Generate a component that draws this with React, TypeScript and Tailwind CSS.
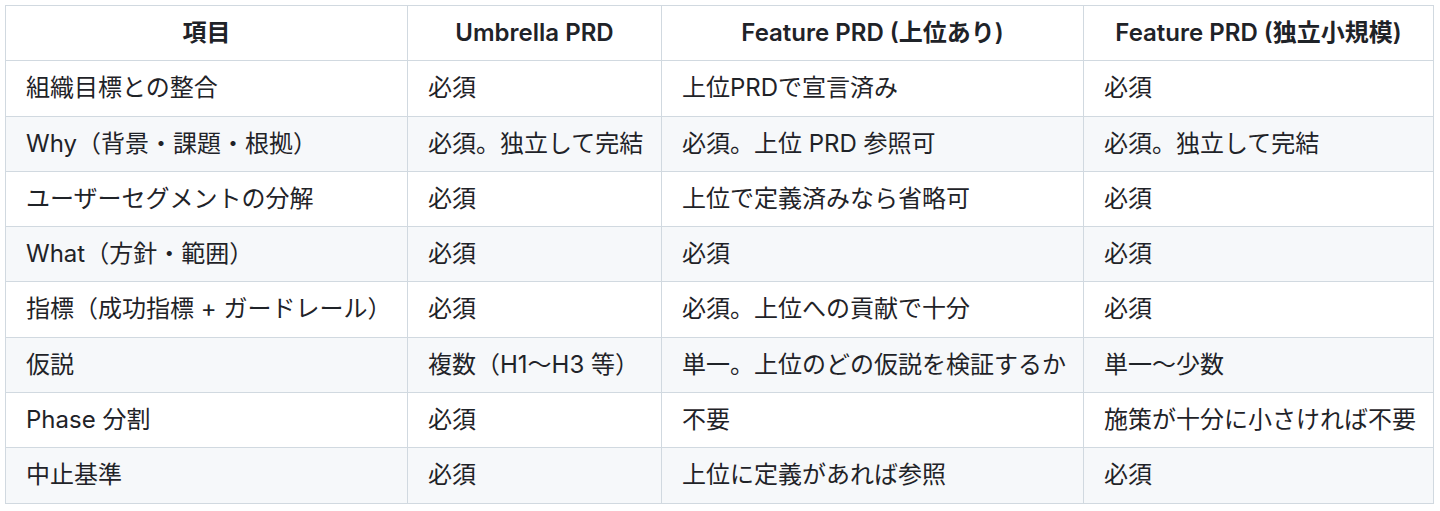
const headers = ['項目', 'Umbrella PRD', 'Feature PRD (上位あり)', 'Feature PRD (独立小規模)'];

const rows = [
  ['組織目標との整合', '必須', '上位PRDで宣言済み', '必須'],
  ['Why（背景・課題・根拠）', '必須。独立して完結', '必須。上位 PRD 参照可', '必須。独立して完結'],
  ['ユーザーセグメントの分解', '必須', '上位で定義済みなら省略可', '必須'],
  ['What（方針・範囲）', '必須', '必須', '必須'],
  ['指標（成功指標 + ガードレール）', '必須', '必須。上位への貢献で十分', '必須'],
  ['仮説', '複数（H1〜H3 等）', '単一。上位のどの仮説を検証するか', '単一〜少数'],
  ['Phase 分割', '必須', '不要', '施策が十分に小さければ不要'],
  ['中止基準', '必須', '上位に定義があれば参照', '必須'],
];

const App = () => {
  return (
    <div className="bg-white w-[1440px] h-[511px] pt-[5px] pl-[5px] text-[#1f2328] font-['Inter','Noto_Sans_CJK_JP',sans-serif]">
      <table className="table-fixed border-collapse w-[1428px] text-[24px] leading-[36.3px]">
        <colgroup>
          <col className="w-[402px]" />
          <col className="w-[254px]" />
          <col className="w-[422px]" />
          <col className="w-[350px]" />
        </colgroup>
        <thead>
          <tr className="bg-white">
            {headers.map((h) => (
              <th
                key={h}
                className="border border-[#d1d9e0] px-[20px] py-[9px] font-semibold text-center whitespace-nowrap"
              >
                {h}
              </th>
            ))}
          </tr>
        </thead>
        <tbody>
          {rows.map((row, i) => (
            <tr key={i} className={i % 2 === 1 ? 'bg-[#f6f8fa]' : 'bg-white'}>
              {row.map((cell, j) => (
                <td key={j} className="border border-[#d1d9e0] px-[20px] py-[9px] whitespace-nowrap">
                  {cell}
                </td>
              ))}
            </tr>
          ))}
        </tbody>
      </table>
    </div>
  );
};

export default App;
